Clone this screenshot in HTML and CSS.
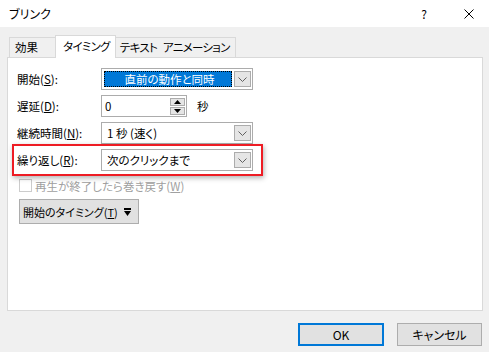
FILE: index.html
```html
<!DOCTYPE html>
<html lang="ja">
<head>
  <meta charset="UTF-8">
  <title>ブリンク</title>
  <link rel="stylesheet" href="styles.css">
</head>
<body>
  <div class="titlebar">
    <span class="title">ブリンク</span>
    <span class="help">?</span>
    <span class="close">
      <svg width="10" height="10" viewBox="0 0 10 10"><path d="M0.5 0.5 L9.5 9.5 M9.5 0.5 L0.5 9.5" stroke="#000" stroke-width="1" fill="none"/></svg>
    </span>
  </div>

  <div class="dialog">
    <div class="tabs">
      <div class="tab tab-effect">効果</div>
      <div class="tab tab-timing active">タイミング</div>
      <div class="tab tab-text">テキスト アニメーション</div>
    </div>

    <div class="panel">
      <div class="row">
        <span class="label">開始(<u>S</u>):</span>
        <div class="combo">
          <span class="combo-value selected">直前の動作と同時</span>
          <span class="combo-btn"><svg width="9" height="5" viewBox="0 0 9 5"><path d="M0.5 0.5 L4.5 4.5 L8.5 0.5" stroke="#606060" fill="none"/></svg></span>
        </div>
      </div>

      <div class="row">
        <span class="label">遅延(<u>D</u>):</span>
        <div class="spin">
          <span class="spin-value">0</span>
          <span class="spin-btns">
            <span class="spin-btn"><svg width="7" height="4" viewBox="0 0 7 4"><path d="M3.5 0 L7 4 L0 4 Z" fill="#000"/></svg></span>
            <span class="spin-btn"><svg width="7" height="4" viewBox="0 0 7 4"><path d="M0 0 L7 0 L3.5 4 Z" fill="#000"/></svg></span>
          </span>
        </div>
        <span class="unit">秒</span>
      </div>

      <div class="row">
        <span class="label">継続時間(<u>N</u>):</span>
        <div class="combo">
          <span class="combo-value">1 秒 (速く)</span>
          <span class="combo-btn"><svg width="9" height="5" viewBox="0 0 9 5"><path d="M0.5 0.5 L4.5 4.5 L8.5 0.5" stroke="#606060" fill="none"/></svg></span>
        </div>
      </div>

      <div class="row row-highlight">
        <span class="label">繰り返し(<u>R</u>):</span>
        <div class="combo">
          <span class="combo-value">次のクリックまで</span>
          <span class="combo-btn"><svg width="9" height="5" viewBox="0 0 9 5"><path d="M0.5 0.5 L4.5 4.5 L8.5 0.5" stroke="#606060" fill="none"/></svg></span>
        </div>
      </div>

      <div class="check-row">
        <span class="checkbox"></span>
        <span class="check-label">再生が終了したら巻き戻す(<u>W</u>)</span>
      </div>

      <button class="timing-btn">
        <span>開始のタイミング(<u>T</u>)</span>
        <svg width="7" height="8" viewBox="0 0 7 8"><rect x="0" y="0" width="7" height="2" fill="#000"/><path d="M0 3 L7 3 L3.5 8 Z" fill="#000"/></svg>
      </button>
    </div>

    <div class="buttons">
      <button class="btn btn-default">OK</button>
      <button class="btn">キャンセル</button>
    </div>
  </div>
</body>
</html>
```

FILE: styles.css
```css
body {
  margin: 0;
  width: 489px;
  height: 352px;
  overflow: hidden;
  background-color: #f0f0f0;
  font-family: "Noto Sans CJK JP", sans-serif;
  font-size: 11.5px;
  font-feature-settings: "palt";
  color: #000;
}

u {
  text-decoration: underline;
  text-underline-offset: 1px;
}

/* title bar */
.titlebar {
  height: 27px;
  background-color: #fff;
  display: flex;
  align-items: center;
  padding-left: 9px;
}

.title {
  flex: 1;
  font-size: 12px;
  line-height: 1;
}

.help {
  font-size: 12px;
  line-height: 1;
  margin-right: 37px;
}

.close {
  display: flex;
  margin-right: 15px;
}

/* tabs */
.dialog {
  padding: 8px 6px 0 7px;
}

.tabs {
  display: flex;
  align-items: flex-end;
  height: 22px;
  padding-left: 2px;
}

.tab {
  box-sizing: border-box;
  height: 20px;
  line-height: 18px;
  padding: 0 5px;
  border: 1px solid #d9d9d9;
  border-bottom: none;
  white-space: nowrap;
  letter-spacing: -0.7px;
  word-spacing: 4px;
}

.tab-effect {
  min-width: 48px;
  letter-spacing: 0;
}

.tab.active {
  position: relative;
  z-index: 1;
  height: 23px;
  min-width: 57px;
  margin: 0 -1px -1px -2px;
  padding-left: 7px;
  line-height: 20px;
  background-color: #fff;
}

.tab-text {
  min-width: 110px;
  border-left: none;
}

/* panel */
.panel {
  box-sizing: border-box;
  height: 254px;
  background-color: #fff;
  border: 1px solid #d9d9d9;
  padding: 10px 9px;
}

.row {
  display: flex;
  align-items: center;
  height: 22px;
}

.row + .row {
  margin-top: 5px;
}

.label {
  width: 84px;
  white-space: nowrap;
}

.combo {
  box-sizing: border-box;
  width: 152px;
  height: 22px;
  border: 1px solid #acacac;
  padding: 2px 1px 2px 2px;
  display: flex;
  gap: 2px;
}

.combo-value {
  flex: 1;
  line-height: 16px;
  padding-left: 3px;
  white-space: nowrap;
}

.combo-value.selected {
  background-color: #0078d7;
  color: #fff;
  text-align: center;
  outline: 1px dotted #000;
  outline-offset: -1px;
}

.combo-btn {
  box-sizing: border-box;
  width: 17px;
  background-color: #e5e5e5;
  border: 1px solid #acacac;
  display: flex;
  align-items: center;
  justify-content: center;
}

.spin {
  box-sizing: border-box;
  width: 86px;
  height: 22px;
  border: 1px solid #acacac;
  display: flex;
  align-items: center;
  padding: 1px 1px 1px 3px;
}

.spin-value {
  flex: 1;
}

.spin-btns {
  display: flex;
  flex-direction: column;
  gap: 1px;
}

.spin-btn {
  box-sizing: border-box;
  width: 15px;
  height: 8px;
  background-color: #e5e5e5;
  border: 1px solid #acacac;
  display: flex;
  align-items: center;
  justify-content: center;
}

.unit {
  margin-left: 10px;
}

/* red annotation around the repeat row */
.row-highlight {
  position: relative;
  width: max-content;
}

.row-highlight::after {
  content: "";
  position: absolute;
  left: -5px;
  top: -5px;
  right: -10px;
  bottom: -5px;
  border: 2px solid #ee1c24;
  box-shadow: 1px 2px 5px rgba(0, 0, 0, 0.3);
}

.check-row {
  display: flex;
  align-items: center;
  margin-top: 8px;
  height: 13px;
  padding-left: 2px;
  color: #a0a0a0;
}

.checkbox {
  box-sizing: border-box;
  width: 13px;
  height: 13px;
  border: 1px solid #cccccc;
  margin-right: 3px;
}

.timing-btn {
  display: flex;
  align-items: center;
  gap: 6px;
  margin: 7px 0 0 2px;
  box-sizing: border-box;
  height: 25px;
  padding: 0 7px 0 3px;
  background-color: #e1e1e1;
  border: 1px solid #adadad;
  font: inherit;
  font-size: 11px;
  color: #000;
}

.timing-btn span {
  white-space: nowrap;
}

/* bottom buttons */
.buttons {
  display: flex;
  justify-content: flex-end;
  gap: 13px;
  margin-top: 12px;
  padding-right: 1px;
}

.btn {
  box-sizing: border-box;
  width: 85px;
  height: 23px;
  background-color: #e1e1e1;
  border: 1px solid #adadad;
  font: inherit;
  font-size: 12px;
  color: #000;
  padding: 0;
}

.btn-default {
  width: 86px;
  border: 2px solid #0078d7;
}
```
